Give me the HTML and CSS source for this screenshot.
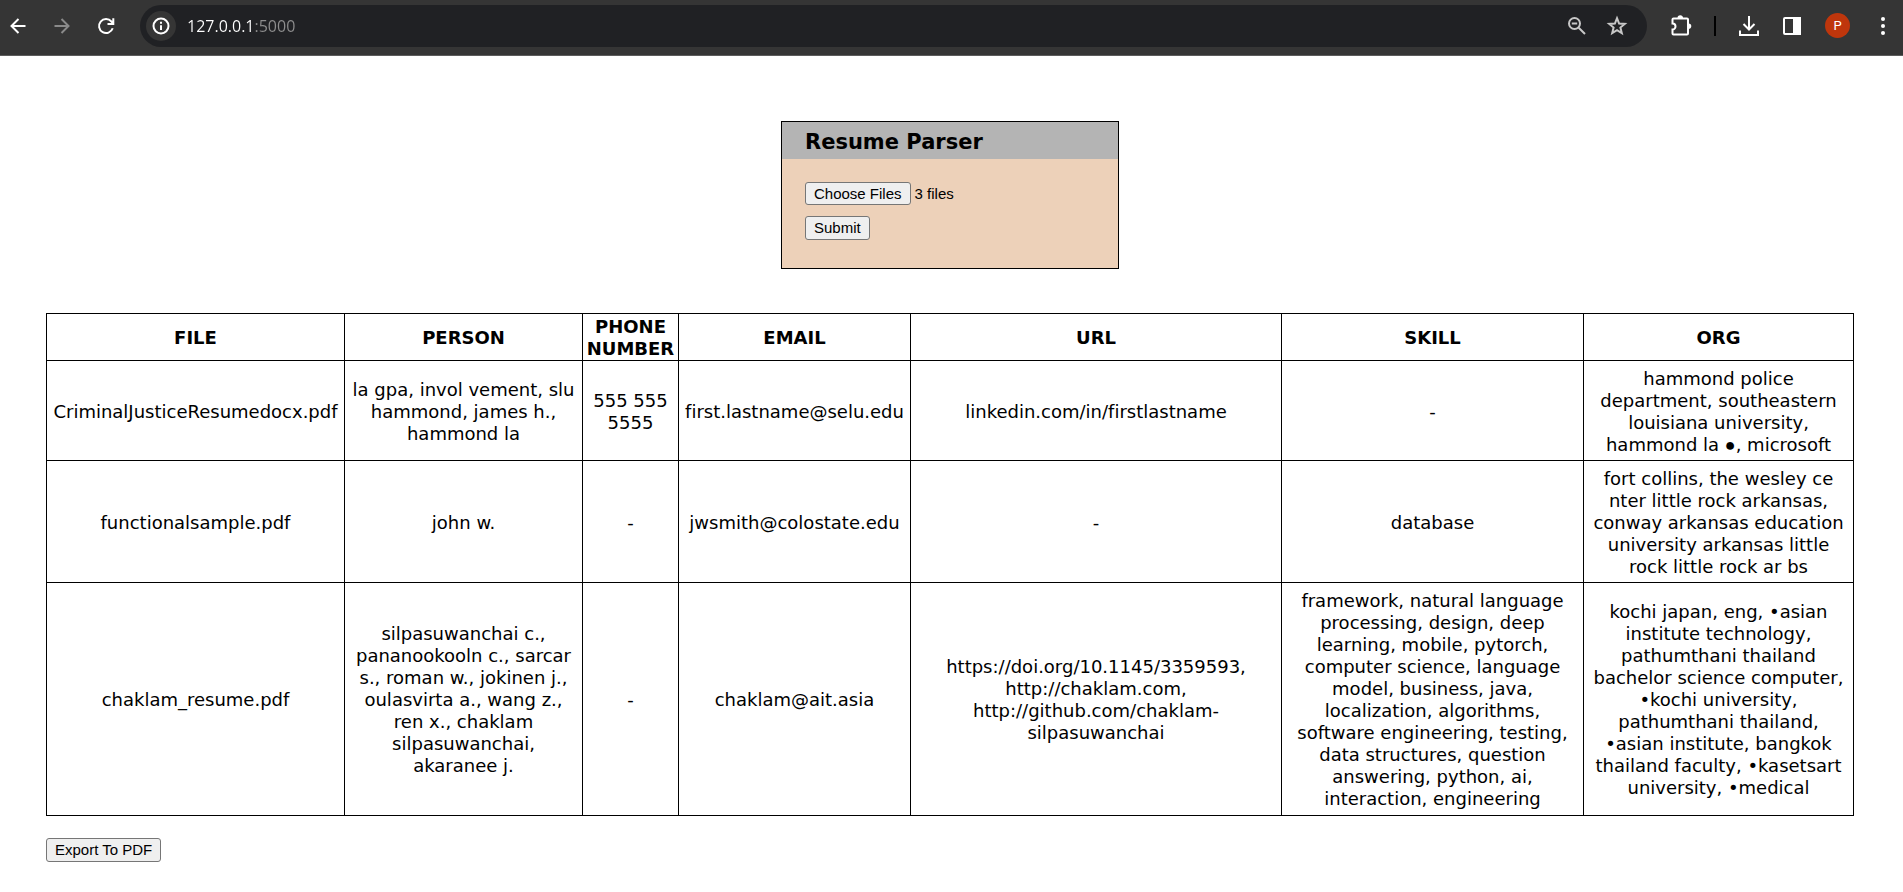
FILE: index.html
```html
<!DOCTYPE html>
<html lang="en">
<head>
<meta charset="utf-8">
<title>Resume Parser</title>
<link rel="stylesheet" href="styles.css">
</head>
<body>
<header class="toolbar">
  <nav class="nav-buttons" aria-label="Navigation">
    <button class="icon-button" type="button" aria-label="Back">
      <svg width="20" height="20" viewBox="0 0 20 20"><path d="M17.500 10H4M10.500 3L3.500 10l7 7"/></svg>
    </button>
    <button class="icon-button dim" type="button" aria-label="Forward">
      <svg width="20" height="20" viewBox="0 0 20 20"><path d="M2.500 10H16M9.500 3l7 7-7 7"/></svg>
    </button>
    <button class="icon-button" type="button" aria-label="Reload">
      <svg width="20" height="20" viewBox="0 0 20 20"><path d="M16.700 12.300A7 7 0 1 1 15.400 5.500L17 7.300M17.300 2.200V8H11.500"/></svg>
    </button>
  </nav>
  <div class="address-bar">
    <button class="site-info" type="button" aria-label="Site information">
      <svg width="20" height="20" viewBox="0 0 20 20"><circle cx="10" cy="10" r="7.500"/><path d="M10 9.200V14M10 5.800V7.700"/></svg>
    </button>
    <input class="url" type="text" value="127.0.0.1:5000" aria-label="Address">
    <button class="icon-button soft" type="button" aria-label="Zoom">
      <svg width="20" height="20" viewBox="0 0 20 20"><circle cx="7.500" cy="7.500" r="5.500"/><path d="M11.700 11.700L18 18M4.800 7.500h5.400"/></svg>
    </button>
    <button class="icon-button soft" type="button" aria-label="Bookmark">
      <svg width="22" height="22" viewBox="0 0 22 22"><path d="M11 3.200l2.100 5.300 5.700.4-4.400 3.600 1.400 5.600-4.800-3-4.800 3 1.400-5.600-4.400-3.600 5.700-.4z"/></svg>
    </button>
  </div>
  <div class="tools">
    <button class="icon-button" type="button" aria-label="Extensions">
      <svg width="24" height="24" viewBox="0 0 24 24"><path d="M4.500 4.500H18a1 1 0 0 1 1 1V19.500a1 1 0 0 1-1 1H4.500a1 1 0 0 1-1-1V15.500a3 3 0 0 0 0-6V5.500a1 1 0 0 1 1-1z"/><path class="solid" d="M9.500 4a1.800 1.800 0 0 1 3.600 0zM19.500 10.500a1.800 1.800 0 0 1 0 3.600z"/></svg>
    </button>
    <span class="divider"></span>
    <button class="icon-button" type="button" aria-label="Downloads">
      <svg width="22" height="22" viewBox="0 0 22 22"><path d="M11 1v13M5.500 9l5.500 5.500L16.500 9M2 15.500V20h18v-4.500"/></svg>
    </button>
    <button class="icon-button" type="button" aria-label="Side panel">
      <svg width="20" height="20" viewBox="0 0 20 20"><rect x="2" y="2" width="16" height="16" rx="1"/><path class="solid" d="M12 2h6v16h-6z"/></svg>
    </button>
    <button class="avatar" type="button" aria-label="Profile">P</button>
    <button class="icon-button" type="button" aria-label="Menu">
      <svg width="20" height="20" viewBox="0 0 20 20"><g class="solid dots"><circle cx="10" cy="3" r="2"/><circle cx="10" cy="10" r="2"/><circle cx="10" cy="17" r="2"/></g></svg>
    </button>
  </div>
</header>

<main class="page">
  <section class="card">
    <h1 class="card-title">Resume Parser</h1>
    <form class="card-body">
      <input class="file-input" id="resumes" type="file" multiple aria-label="Resume files">
      <button class="button" type="submit">Submit</button>
    </form>
  </section>

  <table class="results">
    <colgroup>
      <col class="col-file"><col class="col-person"><col class="col-phone"><col class="col-email"><col class="col-url"><col class="col-skill"><col class="col-org">
    </colgroup>
    <thead>
      <tr><th>FILE</th><th>PERSON</th><th>PHONE NUMBER</th><th>EMAIL</th><th>URL</th><th>SKILL</th><th>ORG</th></tr>
    </thead>
    <tbody>
      <tr>
        <td>CriminalJusticeResumedocx.pdf</td>
        <td>la gpa, invol vement, slu<br>hammond, james h.,<br>hammond la</td>
        <td>555 555<br>5555</td>
        <td>first.lastname@selu.edu</td>
        <td>linkedin.com/in/firstlastname</td>
        <td>-</td>
        <td>hammond police<br>department, southeastern<br>louisiana university,<br>hammond la <span class="bullet">●</span>, microsoft</td>
      </tr>
      <tr>
        <td>functionalsample.pdf</td>
        <td>john w.</td>
        <td>-</td>
        <td>jwsmith@colostate.edu</td>
        <td>-</td>
        <td>database</td>
        <td>fort collins, the wesley ce<br>nter little rock arkansas,<br>conway arkansas education<br>university arkansas little<br>rock little rock ar bs</td>
      </tr>
      <tr>
        <td>chaklam_resume.pdf</td>
        <td>silpasuwanchai c.,<br>pananookooln c., sarcar<br>s., roman w., jokinen j.,<br>oulasvirta a., wang z.,<br>ren x., chaklam<br>silpasuwanchai,<br>akaranee j.</td>
        <td>-</td>
        <td>chaklam@ait.asia</td>
        <td>https://doi.org/10.1145/3359593,<br>http://chaklam.com,<br>http://github.com/chaklam-<br>silpasuwanchai</td>
        <td>framework, natural language<br>processing, design, deep<br>learning, mobile, pytorch,<br>computer science, language<br>model, business, java,<br>localization, algorithms,<br>software engineering, testing,<br>data structures, question<br>answering, python, ai,<br>interaction, engineering</td>
        <td>kochi japan, eng, •asian<br>institute technology,<br>pathumthani thailand<br>bachelor science computer,<br>•kochi university,<br>pathumthani thailand,<br>•asian institute, bangkok<br>thailand faculty, •kasetsart<br>university, •medical</td>
      </tr>
    </tbody>
  </table>

  <button class="button" type="button">Export To PDF</button>
</main>
<script src="script.js"></script>
</body>
</html>
```
FILE: styles.css
```css
* {
  box-sizing: border-box;
}

body {
  margin: 0;
  background: #fff;
  color: #000;
  font-family: Verdana, "DejaVu Sans", sans-serif;
  font-size: 18px;
  line-height: 22px;
  font-variant-ligatures: none;
}

button,
input {
  font-family: Arial, "Liberation Sans", sans-serif;
  font-size: 15px;
}

/* Browser toolbar */
.toolbar {
  display: flex;
  align-items: center;
  height: 56px;
  padding: 0 10px 4px 8px;
  background: #353535;
  border-bottom: 1px solid #5c5c5c;
}

.nav-buttons {
  display: flex;
  gap: 24px;
}

.icon-button {
  display: flex;
  align-items: center;
  justify-content: center;
  width: 20px;
  height: 24px;
  padding: 0;
  border: 0;
  background: none;
  color: #fff;
}

.icon-button svg,
.site-info svg {
  flex: none;
  fill: none;
  stroke: currentColor;
  stroke-width: 2;
}

.icon-button .solid {
  fill: currentColor;
}

.icon-button .dots {
  stroke: none;
}

.dim {
  color: #8a8a8a;
}

.soft {
  color: #c7c7c7;
}

.address-bar {
  display: flex;
  flex: 1;
  align-items: center;
  gap: 20px;
  height: 42px;
  margin-left: 24px;
  padding: 0 20px 0 6px;
  border-radius: 21px;
  background: #202124;
}

.site-info {
  display: flex;
  align-items: center;
  justify-content: center;
  width: 30px;
  height: 30px;
  padding: 0;
  border: 0;
  border-radius: 50%;
  background: #353535;
  color: #fff;
}

.url {
  flex: 1;
  min-width: 0;
  height: 30px;
  margin-left: -9px;
  padding: 0;
  border: 0;
  outline: 0;
  color: #fff;
  font-family: "Segoe UI", "Open Sans", sans-serif;
  font-size: 16px;
  background: linear-gradient(90deg, #fff 68px, #8e8e8e 68px);
  background-clip: text;
  -webkit-text-fill-color: transparent;
}

.tools {
  display: flex;
  align-items: center;
  gap: 23px;
  margin-left: 24px;
}

.divider {
  width: 2px;
  height: 20px;
  background: #000;
}

.avatar {
  width: 25px;
  height: 25px;
  padding: 0;
  border: 0;
  border-radius: 50%;
  background: #bf360c;
  color: #fff;
  font-family: Roboto, sans-serif;
  font-size: 13px;
}

/* Page */
.page {
  padding: 65px 49px 29px 46px;
}

.card {
  width: 338px;
  margin: 0 auto 44px;
  border: 1px solid #000;
  background: #edd1b9;
}

.card-title {
  margin: 0;
  padding: 7px 23px 3px;
  background: #b4b4b4;
  font-size: 21px;
  line-height: 27px;
}

.card-body {
  display: flex;
  flex-direction: column;
  align-items: flex-start;
  gap: 11px;
  padding: 23px 23px 28px;
}

.button,
.file-input::file-selector-button {
  height: 24px;
  margin: 0;
  padding: 0 8px;
  border: 1px solid #767676;
  border-radius: 3px;
  background: #efefef;
  color: #000;
  font-family: Arial, "Liberation Sans", sans-serif;
  font-size: 15px;
  line-height: 22px;
}

.file-input {
  height: 23px;
  line-height: 23px;
}

.file-input::file-selector-button {
  height: 23px;
  margin-right: 4px;
  line-height: 21px;
}

.results {
  width: 100%;
  margin-bottom: 22px;
  border-collapse: collapse;
  table-layout: fixed;
  text-align: center;
}

.results th,
.results td {
  border: 1px solid #000;
  vertical-align: middle;
}

.results th {
  padding: 2px 0 0;
}

.results td {
  padding: 7px 0 4px;
  white-space: nowrap;
}

.results tr:last-child td {
  padding-bottom: 5px;
}

.bullet {
  font-family: "Liberation Sans", sans-serif;
  line-height: 1;
}

.col-file { width: 298px; }
.col-person { width: 238px; }
.col-phone { width: 96px; }
.col-email { width: 232px; }
.col-url { width: 371px; }
.col-skill { width: 302px; }
.col-org { width: 270px; }
```
FILE: script.js
```js
const selected = new DataTransfer();
["CriminalJusticeResumedocx.pdf", "functionalsample.pdf", "chaklam_resume.pdf"].forEach((name) => {
  selected.items.add(new File([""], name, { type: "application/pdf" }));
});
document.getElementById("resumes").files = selected.files;
```
